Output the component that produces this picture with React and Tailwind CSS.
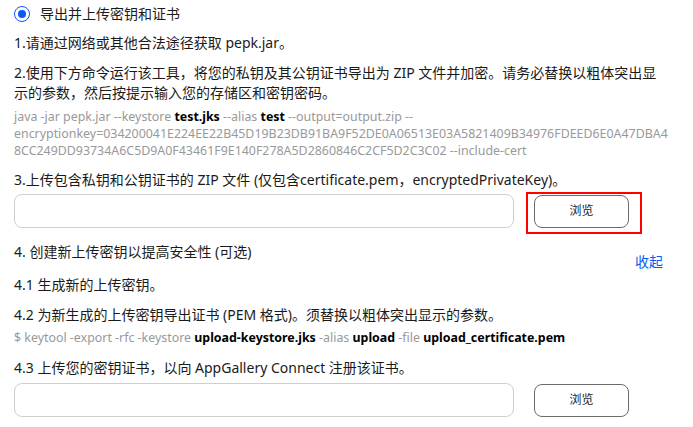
import React from "react";

const FONT = { fontFamily: '"Noto Sans", "Noto Sans CJK SC", sans-serif' };

function Radio() {
  return (
    <div className="w-[16px] h-[16px] rounded-full border-[1.5px] border-[#0a59f7] flex items-center justify-center shrink-0">
      <div className="w-[8px] h-[8px] rounded-full bg-[#0a59f7]" />
    </div>
  );
}

function UploadRow({ highlight }) {
  return (
    <div className="flex items-center">
      <div className="w-[500px] h-[34px] rounded-[8px] border border-[#cfcfcf] bg-white" />
      <div className="relative ml-[20px]">
        {highlight && (
          <div className="absolute left-[-8px] top-[-3px] w-[116px] h-[42px] border-2 border-[#ff0000] pointer-events-none" />
        )}
        <button className="relative w-[95px] h-[33px] rounded-[8px] border border-[#6b6b6b] bg-white text-[12px] text-[#1a1a1a] flex items-center justify-center">
          浏览
        </button>
      </div>
    </div>
  );
}

export default function App() {
  const B = ({ children }) => <span className="font-bold text-[#000]">{children}</span>;
  return (
    <div className="w-[693px] h-[427px] bg-white overflow-hidden text-[14px] leading-[20px] text-[#1a1a1a]" style={FONT}>
      <div className="pl-[14px] pr-[30px] pt-[4px]">
        <div className="flex items-center h-[20px]">
          <Radio />
          <span className="ml-[10px]">导出并上传密钥和证书</span>
        </div>

        <div className="mt-[9px]">1.请通过网络或其他合法途径获取 pepk.jar。</div>

        <div className="mt-[10px]">
          2.使用下方命令运行该工具，将您的私钥及其公钥证书导出为 ZIP 文件并加密。请务必替换以粗体突出显示的参数，然后按提示输入您的存储区和密钥密码。
        </div>

        <div className="mt-[5px] text-[12.4px] leading-[17px] text-[#999999] whitespace-nowrap">
          <div>
            java -jar pepk.jar --keystore <B>test.jks</B> --alias <B>test</B> --output=output.zip --
          </div>
          <div>encryptionkey=034200041E224EE22B45D19B23DB91BA9F52DE0A06513E03A5821409B34976FDEED6E0A47DBA4</div>
          <div>8CC249DD93734A6C5D9A0F43461F9E140F278A5D2860846C2CF5D2C3C02 --include-cert</div>
        </div>

        <div className="mt-[11px]">3.上传包含私钥和公钥证书的 ZIP 文件 (仅包含certificate.pem，encryptedPrivateKey)。</div>

        <div className="mt-[4px]">
          <UploadRow highlight />
        </div>

        <div className="mt-[14px]">4. 创建新上传密钥以提高安全性 (可选)</div>
        <div className="mt-[-10px] flex justify-end">
          <span className="text-[#0a59f7] cursor-pointer">收起</span>
        </div>

        <div className="mt-[3px]">4.1 生成新的上传密钥。</div>

        <div className="mt-[10px]">4.2 为新生成的上传密钥导出证书 (PEM 格式)。须替换以粗体突出显示的参数。</div>
        <div className="mt-[4px] text-[12.4px] leading-[17px] text-[#999999] whitespace-nowrap">
          $ keytool -export -rfc -keystore <B>upload-keystore.jks</B> -alias <B>upload</B> -file{" "}
          <B>upload_certificate.pem</B>
        </div>

        <div className="mt-[12px]">4.3 上传您的密钥证书，以向 AppGallery Connect 注册该证书。</div>
        <div className="mt-[5px]">
          <UploadRow />
        </div>
      </div>
    </div>
  );
}
